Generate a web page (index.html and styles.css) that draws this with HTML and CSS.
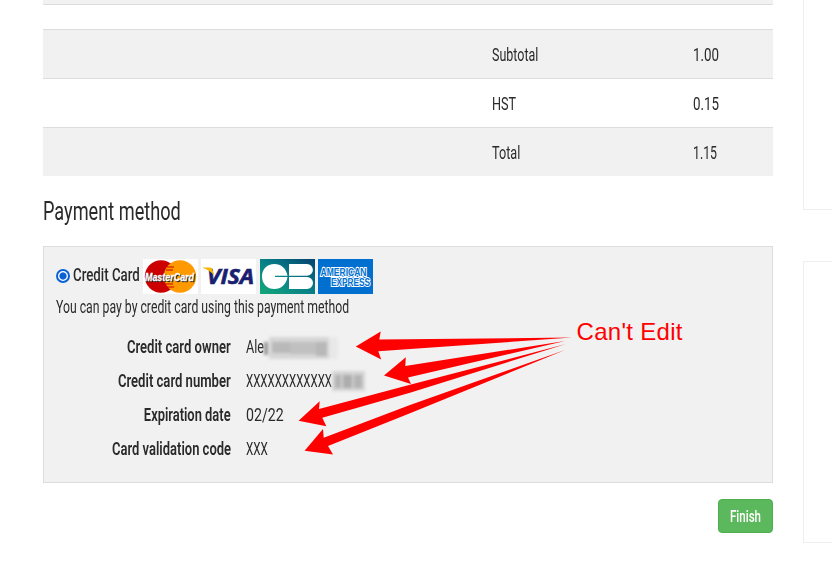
FILE: index.html
```html
<!DOCTYPE html>
<html lang="en">
<head>
    <meta charset="UTF-8">
    <meta name="viewport" content="width=device-width, initial-scale=1.0">
    <title>Payment method</title>
    <link rel="stylesheet" href="styles.css">
</head>
<body>
    <div class="page">
        <main class="content">
            <div class="items-end"></div>

            <div class="totals">
                <div class="total-row">
                    <span class="total-label"><span class="fit" data-width="46">Subtotal</span></span>
                    <span class="total-value"><span class="fit" data-width="26">1.00</span></span>
                </div>
                <div class="total-row">
                    <span class="total-label"><span class="fit" data-width="24">HST</span></span>
                    <span class="total-value"><span class="fit" data-width="26">0.15</span></span>
                </div>
                <div class="total-row">
                    <span class="total-label"><span class="fit" data-width="28">Total</span></span>
                    <span class="total-value"><span class="fit" data-width="24">1.15</span></span>
                </div>
            </div>

            <h2><span class="fit" data-width="138">Payment method</span></h2>

            <div class="panel">
                <label class="method">
                    <span class="radio"></span>
                    <span class="method-name"><span class="fit" data-width="67">Credit Card</span></span>
                    <span class="cards">
                        <svg class="card" viewBox="0 0 55 35">
                            <rect width="55" height="35" fill="#fff"/>
                            <circle cx="18" cy="17.5" r="16.2" fill="#c00"/>
                            <circle cx="37" cy="17.5" r="16.2" fill="#f90"/>
                            <path d="M24 8h7M23 11h7M22 25h8M24 28h7" stroke="#c00" stroke-width="1.2"/>
                            <text class="mc-text mc-shadow" x="3" y="22.5" textLength="49" lengthAdjust="spacingAndGlyphs">MasterCard</text>
                            <text class="mc-text" x="2" y="21.5" textLength="49" lengthAdjust="spacingAndGlyphs">MasterCard</text>
                        </svg>
                        <svg class="card" viewBox="0 0 55 35">
                            <rect width="55" height="35" fill="#fff"/>
                            <text class="visa-text" x="6" y="25" textLength="47" lengthAdjust="spacingAndGlyphs">VISA</text>
                            <path d="M2 8.500h7q2 0 2.500 2l1.500 6q-4-5.500-11-7.500z" fill="#f7b600"/>
                        </svg>
                        <svg class="card" viewBox="0 0 55 35">
                            <defs>
                                <linearGradient id="cb" x1="0" y1="1" x2="1" y2="0">
                                    <stop offset="0" stop-color="#14a878"/>
                                    <stop offset=".5" stop-color="#078087"/>
                                    <stop offset="1" stop-color="#06416f"/>
                                </linearGradient>
                            </defs>
                            <rect width="55" height="35" fill="url(#cb)"/>
                            <path d="M27.500 16.800H15v1.200h12.500C26.500 25.500 21 30 14.500 30 7 30 2 24.500 2 17.400S7 5 14.500 5C21 5 26.500 9.500 27.500 16.800z" fill="#fff"/>
                            <path d="M29 5h18a5.900 5.900 0 0 1 0 11.800H29zM29 18h18a6 6 0 0 1 0 12H29z" fill="#fff"/>
                        </svg>
                        <svg class="card" viewBox="0 0 55 35">
                            <rect width="55" height="35" fill="#006fcf"/>
                            <text class="amex-text" x="2.500" y="16.500" textLength="46" lengthAdjust="spacingAndGlyphs">AMERICAN</text>
                            <text class="amex-text" x="13" y="27" textLength="39" lengthAdjust="spacingAndGlyphs">EXPRESS</text>
                        </svg>
                    </span>
                </label>
                <p class="description"><span class="fit" data-width="293">You can pay by credit card using this payment method</span></p>

                <dl class="details">
                    <dt><span class="fit fit-right" data-width="104">Credit card owner</span></dt>
                    <dd><span class="fit" data-width="18">Ale</span></dd>
                    <dt><span class="fit fit-right" data-width="113">Credit card number</span></dt>
                    <dd><span class="fit" data-width="86">XXXXXXXXXXXX</span></dd>
                    <dt><span class="fit fit-right" data-width="87">Expiration date</span></dt>
                    <dd><span class="fit" data-width="38">02/22</span></dd>
                    <dt><span class="fit fit-right" data-width="119">Card validation code</span></dt>
                    <dd><span class="fit" data-width="22">XXX</span></dd>
                </dl>
            </div>

            <div class="actions">
                <button class="btn"><span class="fit fit-center" data-width="31">Finish</span></button>
            </div>
        </main>

        <aside class="sidebar">
            <div class="box box-top"></div>
            <div class="box box-bottom"></div>
        </aside>
    </div>

    <!-- Annotation drawn over the form -->
    <svg class="notes" viewBox="0 0 832 572">
        <g class="mosaic">
            <rect x="264" y="342" width="4" height="13" fill="#999"/>
            <rect x="269" y="337" width="60" height="22" fill="#d6d6d6"/>
            <rect x="272" y="342" width="18" height="11" fill="#b9b9b9"/>
            <rect x="290" y="342" width="26" height="12" fill="#c0c0c0"/>
            <rect x="316" y="342" width="11" height="14" fill="#b8b8b8"/>
            <rect x="329" y="337" width="9" height="22" fill="#e8e8e8"/>
            <rect x="332" y="371" width="33" height="20" fill="#d4d4d4"/>
            <rect x="335" y="375" width="6" height="13" fill="#b4b4b4"/>
            <rect x="343" y="375" width="9" height="13" fill="#adadad"/>
            <rect x="354" y="375" width="8" height="13" fill="#b4b4b4"/>
        </g>
        <g class="arrows">
            <path d="M355.800 346.500L380.700 331.500 379.300 339.500 572 337.500 378.300 351.300 381.200 359.500z"/>
            <path d="M384 375.500L405.800 357.200 405.300 366 565 341 408 377.500 411 384z"/>
            <path d="M298.600 420.700L319.700 401.200 319 409 410 384.800 566 344 410 392.700 322.300 417.700 326.300 426.200z"/>
            <path d="M304.600 450.700L323 429 323.700 437.700 410 405 565 350 410 413.300 328 446 333 454.500z"/>
        </g>
        <text class="note-text" x="576.500" y="340" textLength="106">Can't Edit</text>
    </svg>

    <script>
        // Condense each text to the width it has in the narrow typeface
        document.querySelectorAll('.fit').forEach(el => {
            el.style.transform = `scaleX(${el.dataset.width / el.offsetWidth})`;
        });
    </script>
</body>
</html>
```
FILE: styles.css
```css
body {
    margin: 0;
    font-family: Roboto, "Liberation Sans", sans-serif;
    font-size: 19px;
    font-weight: 370;
    color: #2a2a2a;
    background: #fff;
    overflow: hidden;
}
.page {
    display: flex;
    justify-content: space-between;
    height: 572px;
    padding-left: 43px;
}
.content {
    width: 730px;
}
.fit {
    display: inline-block;
    white-space: nowrap;
    transform-origin: left;
}
.fit-right {
    transform-origin: right;
}
.fit-center {
    transform-origin: center;
}

/* Order totals */
.items-end {
    height: 4px;
    background: #f1f1f1;
    border-bottom: 1px solid #ddd;
}
.totals {
    margin-top: 24px;
}
.total-row {
    display: grid;
    grid-template-columns: 449px 201px 1fr;
    height: 48px;
    line-height: 50px;
    border-top: 1px solid #ddd;
}
.total-row:nth-child(odd) {
    background: #f1f1f1;
}
.total-label {
    grid-column: 2;
}
h2 {
    margin: 16px 0 14px;
    font-size: 25px;
    font-weight: 370;
    line-height: 40px;
}

/* Payment panel */
.panel {
    box-sizing: border-box;
    height: 237px;
    padding: 12px;
    background: #f1f1f1;
    border: 1px solid #ddd;
}
.method {
    display: flex;
    height: 35px;
    gap: 3px;
}
.radio {
    box-sizing: border-box;
    width: 14px;
    height: 14px;
    margin-top: 10px;
    border: 2px solid #0b62d6;
    border-radius: 50%;
    background: radial-gradient(circle, #0b62d6 3.2px, #fff 4px);
}
.method-name {
    width: 67px;
    font-weight: 500;
    line-height: 31px;
}
.cards {
    display: flex;
    gap: 3.4px;
}
.card {
    width: 55px;
    height: 35px;
}
.mc-text {
    font: italic bold 11.5px "Liberation Sans", sans-serif;
    fill: #fff;
    stroke: #fff;
    stroke-width: 0.3px;
}
.mc-shadow {
    fill: #222;
    stroke: #222;
}
.visa-text {
    font: italic bold 21.5px "Open Sans", sans-serif;
    fill: #1a1f71;
    stroke: #1a1f71;
    stroke-width: 0.6px;
}
.amex-text {
    font: bold 10px "Liberation Sans", sans-serif;
    fill: #006fcf;
    stroke: #fff;
    stroke-width: 2px;
    paint-order: stroke;
}
.description {
    margin: 0;
    line-height: 25px;
}
.details {
    display: grid;
    grid-template-columns: 175px 1fr;
    column-gap: 15px;
    grid-auto-rows: 34px;
    margin: 11px 0 0;
    line-height: 34px;
}
.details dt {
    display: flex;
    justify-content: flex-end;
    font-weight: 600;
}
.details dd {
    margin: 0;
}
.actions {
    display: flex;
    justify-content: flex-end;
    margin-top: 16px;
}
.btn {
    width: 55px;
    height: 34px;
    padding: 0;
    border: 1px solid #4cae4c;
    border-radius: 4px;
    background: #5cb85c;
    color: #fff;
    font-family: inherit;
    font-size: 16px;
    font-weight: 500;
}

/* Sidebar boxes, cut off at the window edge */
.sidebar {
    width: 29px;
}
.box {
    box-sizing: border-box;
    border: 1px solid #eee;
    border-right: 0;
}
.box-top {
    height: 210px;
    border-top: 0;
}
.box-bottom {
    height: 282px;
    margin-top: 51px;
}

/* Annotation layer */
.notes {
    position: absolute;
    top: 0;
    left: 0;
    width: 832px;
    height: 572px;
    pointer-events: none;
}
.mosaic {
    filter: blur(1.5px);
}
.arrows {
    fill: #f00;
}
.note-text {
    font: 24px "Liberation Sans", sans-serif;
    fill: #f00;
}
```
